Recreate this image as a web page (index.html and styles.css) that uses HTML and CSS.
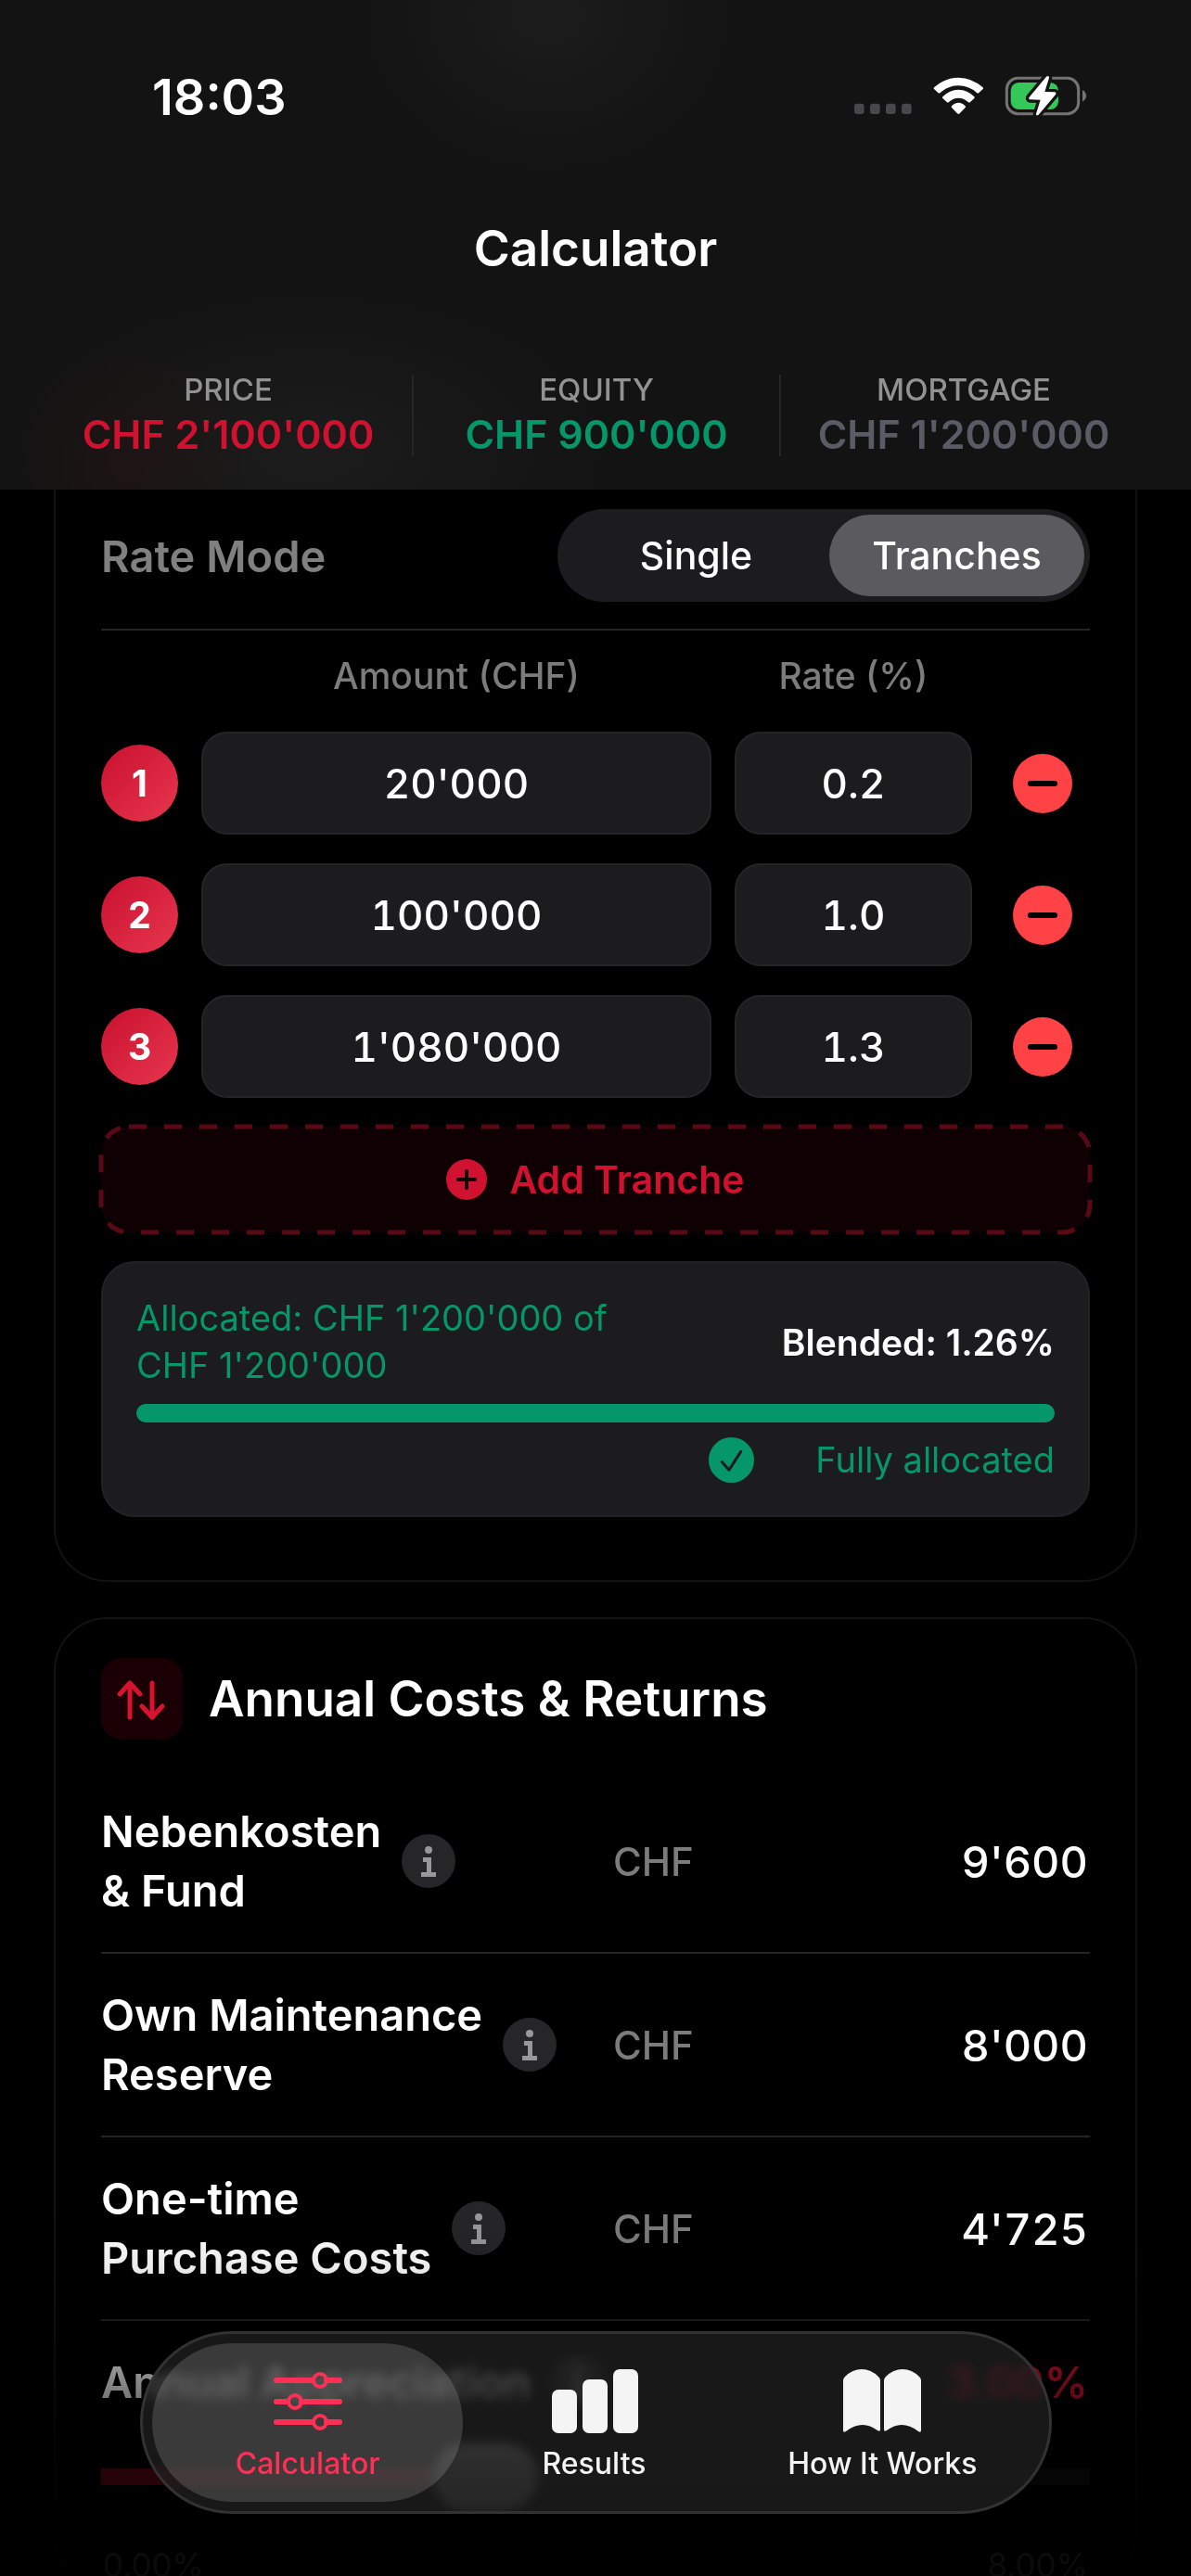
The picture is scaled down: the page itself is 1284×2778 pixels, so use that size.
FILE: index.html
```html
<!DOCTYPE html>
<html lang="en">
<head>
<meta charset="utf-8">
<meta name="viewport" content="width=device-width, initial-scale=1">
<title>Calculator</title>
<link rel="stylesheet" href="styles.css">
</head>
<body>
<div class="app">
  <header class="header">
    <div class="status">
      <time class="clock">18:03</time>
      <svg class="status-icons" viewBox="120 60 756 144" aria-hidden="true">
        <g fill="#48484a">
          <rect x="123" y="155" width="32" height="34" rx="9"/>
          <rect x="174" y="155" width="32" height="34" rx="9"/>
          <rect x="225" y="155" width="32" height="34" rx="9"/>
          <rect x="276" y="155" width="32" height="34" rx="9"/>
        </g>
        <g fill="#fff">
          <path d="M381 103Q417 71 460 71Q503 71 539 103Q541 106 539 108L526 120Q523 123 519 120Q493 97 460 97Q427 97 401 120Q397 123 394 120L381 108Q379 106 381 103Z"/>
          <path d="M409 133Q431 110 460 110Q489 110 511 133Q513 136 511 138L498 150Q495 153 491 150Q477 137 460 137Q443 137 429 150Q425 153 422 150L409 138Q407 136 409 133Z"/>
          <path d="M438 163Q448 152 460 152Q472 152 482 163Q484 166 482 168L464 187Q460 191 456 187L438 168Q436 166 438 163Z"/>
        </g>
        <rect x="616" y="73" width="232" height="115" rx="36" fill="none" stroke="#747476" stroke-width="9"/>
        <path d="M861 111Q873 118 873 130Q873 142 861 149Z" fill="#747476"/>
        <rect x="629" y="87" width="154" height="87" rx="26" fill="#34c759"/>
        <path d="M744 68L689 134Q685 141 692 142L725 143L711 188Q711 197 719 191L774 126Q778 119 771 118L739 117L753 72Q753 63 744 68Z" fill="#fff" stroke="#141414" stroke-width="20" stroke-linejoin="round" paint-order="stroke"/>
      </svg>
    </div>
    <h1 class="title">Calculator</h1>
    <dl class="stats">
      <div class="stat"><dt>PRICE</dt><dd class="red">CHF 2'100'000</dd></div>
      <div class="stat"><dt>EQUITY</dt><dd class="green">CHF 900'000</dd></div>
      <div class="stat"><dt>MORTGAGE</dt><dd class="slate">CHF 1'200'000</dd></div>
    </dl>
  </header>

  <main class="content">
    <section class="card card-mortgage">
      <div class="mode">
        <span class="mode-label" id="mode-label">Rate Mode</span>
        <div class="segmented" role="radiogroup" aria-labelledby="mode-label">
          <label class="segment"><input type="radio" name="mode"><span>Single</span></label>
          <label class="segment"><input type="radio" name="mode" checked><span>Tranches</span></label>
        </div>
      </div>
      <div class="tranche-row tranche-head">
        <span id="col-amount" class="col-amount">Amount (CHF)</span>
        <span id="col-rate">Rate (%)</span>
      </div>
      <div class="stack">
        <div class="tranche-row">
          <span class="badge">1</span>
          <input class="field" type="text" value="20'000" aria-labelledby="col-amount">
          <input class="field" type="text" value="0.2" aria-labelledby="col-rate">
          <button class="remove" type="button" aria-label="Remove tranche 1"></button>
        </div>
        <div class="tranche-row">
          <span class="badge">2</span>
          <input class="field" type="text" value="100'000" aria-labelledby="col-amount">
          <input class="field" type="text" value="1.0" aria-labelledby="col-rate">
          <button class="remove" type="button" aria-label="Remove tranche 2"></button>
        </div>
        <div class="tranche-row">
          <span class="badge">3</span>
          <input class="field" type="text" value="1'080'000" aria-labelledby="col-amount">
          <input class="field" type="text" value="1.3" aria-labelledby="col-rate">
          <button class="remove" type="button" aria-label="Remove tranche 3"></button>
        </div>
        <button class="add" type="button">
          <svg class="add-outline" aria-hidden="true"><rect width="100%" height="100%" rx="30"/></svg>
          <svg class="add-icon" viewBox="0 0 44 44" aria-hidden="true"><circle cx="22" cy="22" r="22" fill="#d0112f"/><path d="M22 13V31M13 22H31" stroke="#0f0003" stroke-width="4" stroke-linecap="round"/></svg>
          <span>Add Tranche</span>
        </button>
        <div class="summary">
          <div class="summary-top">
            <p class="allocated">Allocated: CHF 1'200'000 of<br>CHF 1'200'000</p>
            <p class="blended">Blended: 1.26%</p>
          </div>
          <div class="bar" role="progressbar" aria-label="Allocated" aria-valuenow="100"><div class="bar-fill" style="width:100%"></div></div>
          <div class="done">
            <svg class="done-icon" viewBox="0 0 48 48" aria-hidden="true"><circle cx="24" cy="24" r="24" fill="#059669"/><path d="M14 26L21.500 34.500L34 15" fill="none" stroke="#1c1c1e" stroke-width="3" stroke-linecap="round" stroke-linejoin="round"/></svg>
            <span>Fully allocated</span>
          </div>
        </div>
      </div>
    </section>

    <section class="card card-costs">
      <div class="section-head">
        <span class="section-icon">
          <svg viewBox="0 0 88 88" aria-hidden="true"><path d="M31 64V27M20 39L31 27L42 39M55 27V64M44 52L55 64L66 52" fill="none" stroke="#d8122f" stroke-width="5" stroke-linecap="round" stroke-linejoin="round"/></svg>
        </span>
        <h2>Annual Costs &amp; Returns</h2>
      </div>
      <div class="cost">
        <div class="cost-name">
          <label for="fund">Nebenkosten<br>&amp; Fund</label>
          <button class="info" type="button" aria-label="About Nebenkosten"><svg viewBox="0 0 58 58" aria-hidden="true"><circle cx="29" cy="17" r="4"/><path d="M23 25H32V41H37V46H21V41H27V30H23Z"/></svg></button>
        </div>
        <span class="unit">CHF</span>
        <input class="cost-value" id="fund" type="text" value="9'600">
      </div>
      <div class="cost">
        <div class="cost-name">
          <label for="reserve">Own Maintenance<br>Reserve</label>
          <button class="info" type="button" aria-label="About own maintenance"><svg viewBox="0 0 58 58" aria-hidden="true"><circle cx="29" cy="17" r="4"/><path d="M23 25H32V41H37V46H21V41H27V30H23Z"/></svg></button>
        </div>
        <span class="unit">CHF</span>
        <input class="cost-value" id="reserve" type="text" value="8'000">
      </div>
      <div class="cost">
        <div class="cost-name">
          <label for="purchase">One-time<br>Purchase Costs</label>
          <button class="info" type="button" aria-label="About purchase costs"><svg viewBox="0 0 58 58" aria-hidden="true"><circle cx="29" cy="17" r="4"/><path d="M23 25H32V41H37V46H21V41H27V30H23Z"/></svg></button>
        </div>
        <span class="unit">CHF</span>
        <input class="cost-value" id="purchase" type="text" value="4'725">
      </div>
      <div class="growth">
        <div class="cost-name">
          <label for="growth">Annual Appreciation</label>
          <button class="info" type="button" aria-label="About appreciation"><svg viewBox="0 0 58 58" aria-hidden="true"><circle cx="29" cy="17" r="4"/><path d="M23 25H32V41H37V46H21V41H27V30H23Z"/></svg></button>
        </div>
        <output class="growth-value" for="growth">3.00%</output>
      </div>
      <input class="slider" id="growth" type="range" min="0" max="8" step="0.25" value="3">
      <div class="scale"><span>0.00%</span><span>8.00%</span></div>
    </section>
  </main>

  <div class="fade"></div>
  <nav class="tabs" aria-label="Sections">
    <button class="tab tab-active" type="button" aria-current="page">
      <svg viewBox="0 0 96 72" aria-hidden="true"><g fill="none" stroke="#ff2f55" stroke-width="6" stroke-linecap="round"><path d="M14 14H52M68 14H82M14 37H25M41 37H82M14 59H52M68 59H82"/><circle cx="61" cy="14" r="7" stroke-width="4"/><circle cx="34" cy="37" r="7" stroke-width="4"/><circle cx="61" cy="59" r="7" stroke-width="4"/></g></svg>
      <span>Calculator</span>
    </button>
    <button class="tab" type="button">
      <svg viewBox="0 0 96 72" aria-hidden="true"><g fill="#f4f4f4"><rect x="2" y="24" width="27" height="47" rx="7"/><rect x="35" y="13" width="27" height="58" rx="7"/><rect x="68" y="2" width="27" height="69" rx="7"/></g></svg>
      <span>Results</span>
    </button>
    <button class="tab" type="button">
      <svg viewBox="0 0 96 72" aria-hidden="true"><g fill="#f4f4f4"><path d="M6 14Q6 12 8 10Q16 2 26 2Q36 2 44 10Q46 12 46 14V67Q46 70 43 68Q35 62 27 62Q18 62 9 69Q6 71 6 68Z"/><path d="M50 14Q50 12 52 10Q60 2 70 2Q80 2 88 10Q90 12 90 14V68Q90 71 87 69Q78 62 69 62Q61 62 53 68Q50 70 50 67Z"/></g></svg>
      <span>How It Works</span>
    </button>
  </nav>
</div>
</body>
</html>
```
FILE: styles.css
```css
* { box-sizing: border-box; }

body {
  margin: 0;
  background: #000;
  color: #fff;
  font-family: Inter, "Liberation Sans", sans-serif;
}

h1, h2, p, dl, dd { margin: 0; }
button, input { font: inherit; color: inherit; }
button { padding: 0; border: 0; background: none; }
svg { display: block; }

.app {
  height: 100vh;
  display: flex;
  flex-direction: column;
  overflow: hidden;
}

/* Header */
.header {
  flex: none;
  padding: 0 48px 36px;
  background:
    radial-gradient(ellipse 200px 170px at 46% 3%, #1c1c1c, transparent),
    radial-gradient(ellipse 130px 130px at 11% 94%, rgba(50, 12, 16, 0.25), transparent),
    radial-gradient(ellipse 320px 170px at 26% 92%, #1c1c1c, transparent),
    #131313;
}
.status {
  height: 208px;
  padding: 0 64px 0 116px;
  display: flex;
  align-items: center;
  justify-content: space-between;
}
.clock { font-size: 54px; font-weight: 600; }
.status-icons { width: 252px; height: 48px; }
.title {
  font-size: 53px;
  line-height: 120px;
  font-weight: 600;
  text-align: center;
}
.stats {
  margin-top: 76px;
  display: grid;
  grid-template-columns: repeat(3, 1fr);
}
.stat {
  display: flex;
  flex-direction: column;
  gap: 8px;
  text-align: center;
  white-space: nowrap;
}
.stat + .stat { border-left: 2px solid #262626; }
.stat dt { font-size: 33px; line-height: 32px; font-weight: 500; color: #929292; }
.stat dd { font-size: 43px; line-height: 48px; font-weight: 600; }
.red { color: #d0112f; }
.green { color: #059669; }
.slate { color: #5b5b66; }

/* Cards */
.content {
  flex: 1;
  min-height: 0;
  padding: 0 58px;
  display: flex;
  flex-direction: column;
  gap: 38px;
}
.card { flex: none; border: 2px solid #121212; padding: 0 49px; }
.card-mortgage {
  border-top: 0;
  border-radius: 0 0 58px 58px;
  padding-top: 21px;
  padding-bottom: 68px;
}
.card-costs { border-radius: 58px; padding-top: 42px; }

.mode {
  padding-bottom: 29px;
  border-bottom: 2px solid #242424;
  display: flex;
  align-items: center;
  justify-content: space-between;
}
.mode-label { font-size: 47px; font-weight: 600; color: #808080; }
.segmented {
  width: 574px;
  height: 100px;
  padding: 6px;
  border-radius: 50px;
  background: #1c1c1e;
  display: grid;
  grid-template-columns: 287fr 275fr;
}
.segment { position: relative; display: grid; }
.segment input { position: absolute; margin: 0; opacity: 0; }
.segment span {
  display: grid;
  place-items: center;
  border-radius: 44px;
  font-size: 41px;
  font-weight: 500;
}
.segment input:checked + span { background: #5b5b5f; }

.tranche-row {
  display: grid;
  grid-template-columns: 83px 1fr 256px 102px;
  gap: 25px;
  align-items: center;
}
.tranche-head {
  margin: 25px 0 36px;
  font-size: 39px;
  line-height: 48px;
  font-weight: 500;
  color: #7c7c7c;
  text-align: center;
}
.col-amount { grid-column: 2; }
.stack { display: flex; flex-direction: column; gap: 31px; }
.badge {
  height: 83px;
  border-radius: 50%;
  background: linear-gradient(135deg, #c8102e, #e8374f);
  display: grid;
  place-items: center;
  font-size: 39px;
  font-weight: 700;
}
.field {
  width: 100%;
  min-width: 0;
  height: 111px;
  padding: 0;
  border: 2px solid #252527;
  border-radius: 28px;
  background: #1c1c1e;
  font-size: 44px;
  font-weight: 500;
  text-align: center;
  font-variant-numeric: tabular-nums;
}
.remove {
  width: 64px;
  height: 64px;
  border-radius: 50%;
  background: #ff4245;
  justify-self: center;
  display: grid;
  place-items: center;
}
.remove::before {
  content: "";
  width: 32px;
  height: 6px;
  border-radius: 3px;
  background: #000;
}
.add {
  position: relative;
  height: 114px;
  border-radius: 30px;
  background: #0f0003;
  color: #d0112f;
  display: flex;
  align-items: center;
  justify-content: center;
  gap: 24px;
  font-size: 41px;
  font-weight: 600;
}
.add-outline {
  position: absolute;
  inset: 0;
  width: 100%;
  height: 100%;
  overflow: visible;
}
.add-outline rect {
  fill: none;
  stroke: #590816;
  stroke-width: 5;
  stroke-dasharray: 19 19;
}
.add-icon { width: 44px; height: 44px; }

.summary {
  padding: 34px 36px 35px;
  border: 2px solid #222224;
  border-radius: 36px;
  background: #1c1c1e;
  display: flex;
  flex-direction: column;
  gap: 16px;
  font-size: 38px;
  color: #059669;
}
.summary-top {
  display: flex;
  align-items: center;
  justify-content: space-between;
  line-height: 51px;
  white-space: nowrap;
}
.blended { color: #fff; font-size: 39px; font-weight: 600; }
.bar { height: 20px; border-radius: 10px; background: #2c2c2e; overflow: hidden; }
.bar-fill { height: 100%; background: #059669; }
.done {
  display: flex;
  align-items: center;
  justify-content: flex-end;
  gap: 66px;
  line-height: 49px;
}
.done-icon { width: 49px; height: 49px; }

/* Annual costs */
.section-head {
  margin-bottom: 33px;
  display: flex;
  align-items: center;
  gap: 28px;
}
.section-head h2 { font-size: 53px; font-weight: 600; white-space: nowrap; }
.section-icon {
  width: 88px;
  height: 88px;
  border-radius: 22px;
  background: #1a0004;
}
.cost {
  padding: 34px 2px 34px 0;
  border-bottom: 2px solid #242424;
  display: grid;
  grid-template-columns: 552px auto 1fr;
  align-items: center;
}
.cost-name {
  display: flex;
  align-items: center;
  gap: 22px;
  font-size: 47px;
  line-height: 64px;
  font-weight: 600;
  white-space: nowrap;
}
.info {
  width: 58px;
  height: 58px;
  border-radius: 50%;
  background: #262628;
}
.info svg { fill: #98989c; }
.unit { font-size: 42px; font-weight: 500; color: #7c7c7c; }
.cost-value {
  min-width: 0;
  width: 100%;
  padding: 0;
  border: 0;
  background: none;
  font-size: 47px;
  font-weight: 500;
  text-align: right;
  font-variant-numeric: tabular-nums;
}
.growth {
  padding: 34px 2px 34px 0;
  display: flex;
  align-items: center;
  justify-content: space-between;
}
.growth-value { font-size: 47px; font-weight: 600; line-height: 64px; color: #d0112f; }
.slider {
  display: block;
  width: 100%;
  height: 72px;
  margin: 0;
  appearance: none;
  background: linear-gradient(90deg, #c8102e 38%, #1c1c1e 38%) center / 100% 18px no-repeat;
}
.slider::-webkit-slider-thumb {
  appearance: none;
  width: 114px;
  height: 72px;
  border-radius: 36px;
  background: #fff;
}
.scale {
  margin-top: 35px;
  padding: 0 2px;
  display: flex;
  justify-content: space-between;
  font-size: 35px;
  line-height: 48px;
  color: #7c7c7c;
}

/* Floating tab bar over the scrolled content */
.fade {
  position: fixed;
  inset: auto 0 0;
  height: 390px;
  pointer-events: none;
  background: linear-gradient(transparent, rgba(0, 0, 0, 0.08) 15%, rgba(0, 0, 0, 0.45) 45%, rgba(0, 0, 0, 0.8) 70%, rgba(0, 0, 0, 0.92));
}
.tabs {
  position: fixed;
  left: 151px;
  right: 150px;
  bottom: 67px;
  height: 197px;
  padding: 10px;
  border: 3px solid #323232;
  border-radius: 99px;
  background: rgba(29, 29, 29, 0.84);
  backdrop-filter: blur(6px) brightness(2.3);
  display: grid;
  grid-template-columns: 336fr 283fr 340fr;
}
.tab {
  padding-top: 5px;
  border-radius: 86px;
  display: flex;
  flex-direction: column;
  align-items: center;
  justify-content: center;
  gap: 12px;
  font-size: 32px;
  line-height: 40px;
  font-weight: 500;
  color: #f4f4f4;
}
.tab svg { width: 96px; height: 72px; }
.tab-active { background: rgba(255, 255, 255, 0.15); color: #ff2f55; }
```
